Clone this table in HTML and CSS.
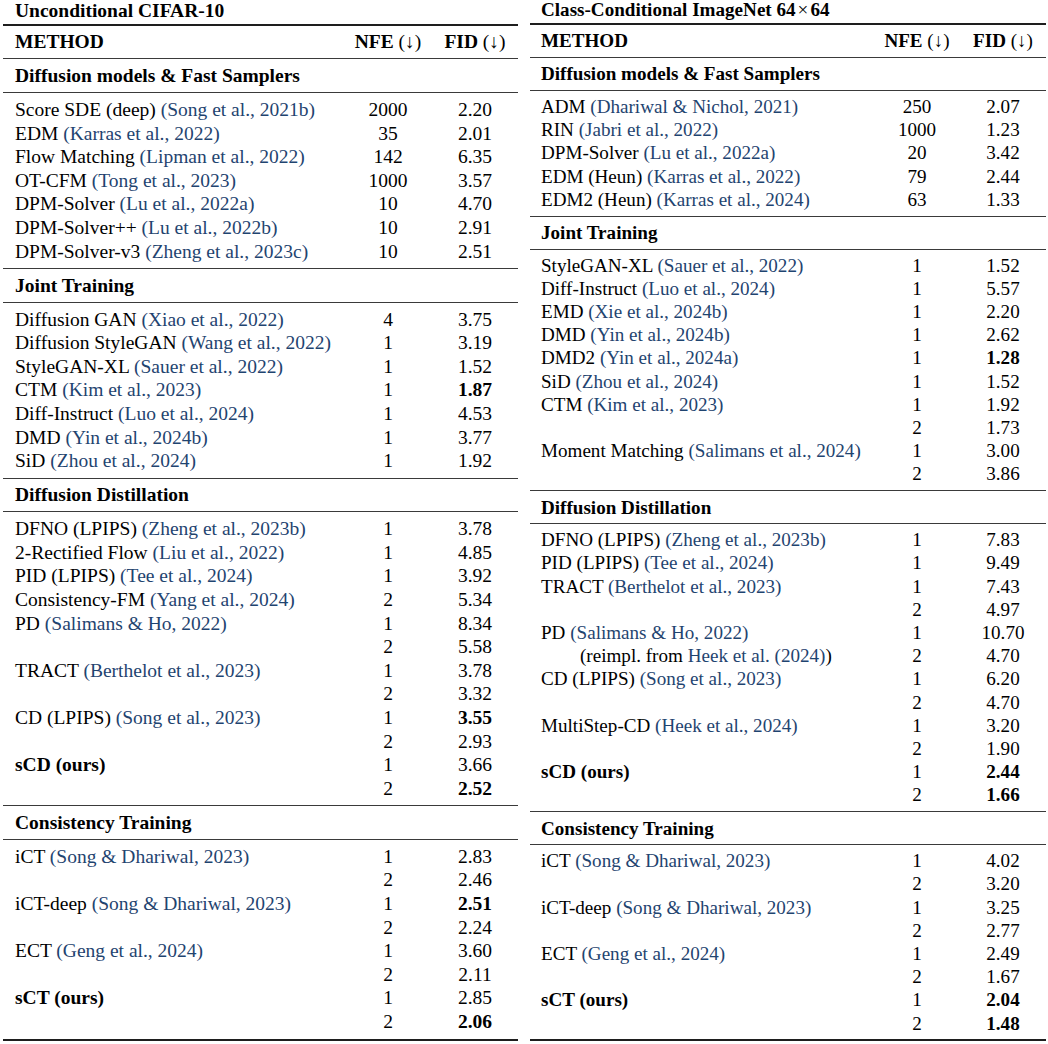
FILE: index.html
```html
<!DOCTYPE html>
<html lang="en">
<head>
<meta charset="utf-8">
<title>Benchmark tables</title>
<link rel="stylesheet" href="styles.css">
</head>
<body>
<div class="page">
  <section class="panel left">
    <div class="title">Unconditional CIFAR-10</div>
    <div class="table">
      <div class="group head">
        <div class="row"><span class="b">METHOD</span><span class="num"><b>NFE</b> (↓)</span><span class="num"><b>FID</b> (↓)</span></div>
      </div>
      <div class="group head"><div class="row"><span class="b">Diffusion models &amp; Fast Samplers</span></div></div>
      <div class="group body">
        <div class="row"><span>Score SDE (deep) <span class="cite">(Song et al., 2021b)</span></span><span class="num">2000</span><span class="num">2.20</span></div>
        <div class="row"><span>EDM <span class="cite">(Karras et al., 2022)</span></span><span class="num">35</span><span class="num">2.01</span></div>
        <div class="row"><span>Flow Matching <span class="cite">(Lipman et al., 2022)</span></span><span class="num">142</span><span class="num">6.35</span></div>
        <div class="row"><span>OT-CFM <span class="cite">(Tong et al., 2023)</span></span><span class="num">1000</span><span class="num">3.57</span></div>
        <div class="row"><span>DPM-Solver <span class="cite">(Lu et al., 2022a)</span></span><span class="num">10</span><span class="num">4.70</span></div>
        <div class="row"><span>DPM-Solver++ <span class="cite">(Lu et al., 2022b)</span></span><span class="num">10</span><span class="num">2.91</span></div>
        <div class="row"><span>DPM-Solver-v3 <span class="cite">(Zheng et al., 2023c)</span></span><span class="num">10</span><span class="num">2.51</span></div>
      </div>
      <div class="group head"><div class="row"><span class="b">Joint Training</span></div></div>
      <div class="group body">
        <div class="row"><span>Diffusion GAN <span class="cite">(Xiao et al., 2022)</span></span><span class="num">4</span><span class="num">3.75</span></div>
        <div class="row"><span>Diffusion StyleGAN <span class="cite">(Wang et al., 2022)</span></span><span class="num">1</span><span class="num">3.19</span></div>
        <div class="row"><span>StyleGAN-XL <span class="cite">(Sauer et al., 2022)</span></span><span class="num">1</span><span class="num">1.52</span></div>
        <div class="row"><span>CTM <span class="cite">(Kim et al., 2023)</span></span><span class="num">1</span><span class="num b">1.87</span></div>
        <div class="row"><span>Diff-Instruct <span class="cite">(Luo et al., 2024)</span></span><span class="num">1</span><span class="num">4.53</span></div>
        <div class="row"><span>DMD <span class="cite">(Yin et al., 2024b)</span></span><span class="num">1</span><span class="num">3.77</span></div>
        <div class="row"><span>SiD <span class="cite">(Zhou et al., 2024)</span></span><span class="num">1</span><span class="num">1.92</span></div>
      </div>
      <div class="group head"><div class="row"><span class="b">Diffusion Distillation</span></div></div>
      <div class="group body">
        <div class="row"><span>DFNO (LPIPS) <span class="cite">(Zheng et al., 2023b)</span></span><span class="num">1</span><span class="num">3.78</span></div>
        <div class="row"><span>2-Rectified Flow <span class="cite">(Liu et al., 2022)</span></span><span class="num">1</span><span class="num">4.85</span></div>
        <div class="row"><span>PID (LPIPS) <span class="cite">(Tee et al., 2024)</span></span><span class="num">1</span><span class="num">3.92</span></div>
        <div class="row"><span>Consistency-FM <span class="cite">(Yang et al., 2024)</span></span><span class="num">2</span><span class="num">5.34</span></div>
        <div class="row"><span>PD <span class="cite">(Salimans &amp; Ho, 2022)</span></span><span class="num">1</span><span class="num">8.34</span></div>
        <div class="row"><span></span><span class="num">2</span><span class="num">5.58</span></div>
        <div class="row"><span>TRACT <span class="cite">(Berthelot et al., 2023)</span></span><span class="num">1</span><span class="num">3.78</span></div>
        <div class="row"><span></span><span class="num">2</span><span class="num">3.32</span></div>
        <div class="row"><span>CD (LPIPS) <span class="cite">(Song et al., 2023)</span></span><span class="num">1</span><span class="num b">3.55</span></div>
        <div class="row"><span></span><span class="num">2</span><span class="num">2.93</span></div>
        <div class="row"><span class="b">sCD (ours)</span><span class="num">1</span><span class="num">3.66</span></div>
        <div class="row"><span></span><span class="num">2</span><span class="num b">2.52</span></div>
      </div>
      <div class="group head"><div class="row"><span class="b">Consistency Training</span></div></div>
      <div class="group body">
        <div class="row"><span>iCT <span class="cite">(Song &amp; Dhariwal, 2023)</span></span><span class="num">1</span><span class="num">2.83</span></div>
        <div class="row"><span></span><span class="num">2</span><span class="num">2.46</span></div>
        <div class="row"><span>iCT-deep <span class="cite">(Song &amp; Dhariwal, 2023)</span></span><span class="num">1</span><span class="num b">2.51</span></div>
        <div class="row"><span></span><span class="num">2</span><span class="num">2.24</span></div>
        <div class="row"><span>ECT <span class="cite">(Geng et al., 2024)</span></span><span class="num">1</span><span class="num">3.60</span></div>
        <div class="row"><span></span><span class="num">2</span><span class="num">2.11</span></div>
        <div class="row"><span class="b">sCT (ours)</span><span class="num">1</span><span class="num">2.85</span></div>
        <div class="row"><span></span><span class="num">2</span><span class="num b">2.06</span></div>
      </div>
    </div>
  </section>

  <section class="panel right">
    <div class="title">Class-Conditional ImageNet 64<span class="times">×</span>64</div>
    <div class="table">
      <div class="group head">
        <div class="row"><span class="b">METHOD</span><span class="num"><b>NFE</b> (↓)</span><span class="num"><b>FID</b> (↓)</span></div>
      </div>
      <div class="group head"><div class="row"><span class="b">Diffusion models &amp; Fast Samplers</span></div></div>
      <div class="group body">
        <div class="row"><span>ADM <span class="cite">(Dhariwal &amp; Nichol, 2021)</span></span><span class="num">250</span><span class="num">2.07</span></div>
        <div class="row"><span>RIN <span class="cite">(Jabri et al., 2022)</span></span><span class="num">1000</span><span class="num">1.23</span></div>
        <div class="row"><span>DPM-Solver <span class="cite">(Lu et al., 2022a)</span></span><span class="num">20</span><span class="num">3.42</span></div>
        <div class="row"><span>EDM (Heun) <span class="cite">(Karras et al., 2022)</span></span><span class="num">79</span><span class="num">2.44</span></div>
        <div class="row"><span>EDM2 (Heun) <span class="cite">(Karras et al., 2024)</span></span><span class="num">63</span><span class="num">1.33</span></div>
      </div>
      <div class="group head"><div class="row"><span class="b">Joint Training</span></div></div>
      <div class="group body">
        <div class="row"><span>StyleGAN-XL <span class="cite">(Sauer et al., 2022)</span></span><span class="num">1</span><span class="num">1.52</span></div>
        <div class="row"><span>Diff-Instruct <span class="cite">(Luo et al., 2024)</span></span><span class="num">1</span><span class="num">5.57</span></div>
        <div class="row"><span>EMD <span class="cite">(Xie et al., 2024b)</span></span><span class="num">1</span><span class="num">2.20</span></div>
        <div class="row"><span>DMD <span class="cite">(Yin et al., 2024b)</span></span><span class="num">1</span><span class="num">2.62</span></div>
        <div class="row"><span>DMD2 <span class="cite">(Yin et al., 2024a)</span></span><span class="num">1</span><span class="num b">1.28</span></div>
        <div class="row"><span>SiD <span class="cite">(Zhou et al., 2024)</span></span><span class="num">1</span><span class="num">1.52</span></div>
        <div class="row"><span>CTM <span class="cite">(Kim et al., 2023)</span></span><span class="num">1</span><span class="num">1.92</span></div>
        <div class="row"><span></span><span class="num">2</span><span class="num">1.73</span></div>
        <div class="row"><span>Moment Matching <span class="cite">(Salimans et al., 2024)</span></span><span class="num">1</span><span class="num">3.00</span></div>
        <div class="row"><span></span><span class="num">2</span><span class="num">3.86</span></div>
      </div>
      <div class="group head"><div class="row"><span class="b">Diffusion Distillation</span></div></div>
      <div class="group body">
        <div class="row"><span>DFNO (LPIPS) <span class="cite">(Zheng et al., 2023b)</span></span><span class="num">1</span><span class="num">7.83</span></div>
        <div class="row"><span>PID (LPIPS) <span class="cite">(Tee et al., 2024)</span></span><span class="num">1</span><span class="num">9.49</span></div>
        <div class="row"><span>TRACT <span class="cite">(Berthelot et al., 2023)</span></span><span class="num">1</span><span class="num">7.43</span></div>
        <div class="row"><span></span><span class="num">2</span><span class="num">4.97</span></div>
        <div class="row"><span>PD <span class="cite">(Salimans &amp; Ho, 2022)</span></span><span class="num">1</span><span class="num">10.70</span></div>
        <div class="row"><span class="indent">(reimpl. from <span class="cite">Heek et al. (2024)</span>)</span><span class="num">2</span><span class="num">4.70</span></div>
        <div class="row"><span>CD (LPIPS) <span class="cite">(Song et al., 2023)</span></span><span class="num">1</span><span class="num">6.20</span></div>
        <div class="row"><span></span><span class="num">2</span><span class="num">4.70</span></div>
        <div class="row"><span>MultiStep-CD <span class="cite">(Heek et al., 2024)</span></span><span class="num">1</span><span class="num">3.20</span></div>
        <div class="row"><span></span><span class="num">2</span><span class="num">1.90</span></div>
        <div class="row"><span class="b">sCD (ours)</span><span class="num">1</span><span class="num b">2.44</span></div>
        <div class="row"><span></span><span class="num">2</span><span class="num b">1.66</span></div>
      </div>
      <div class="group head"><div class="row"><span class="b">Consistency Training</span></div></div>
      <div class="group body">
        <div class="row"><span>iCT <span class="cite">(Song &amp; Dhariwal, 2023)</span></span><span class="num">1</span><span class="num">4.02</span></div>
        <div class="row"><span></span><span class="num">2</span><span class="num">3.20</span></div>
        <div class="row"><span>iCT-deep <span class="cite">(Song &amp; Dhariwal, 2023)</span></span><span class="num">1</span><span class="num">3.25</span></div>
        <div class="row"><span></span><span class="num">2</span><span class="num">2.77</span></div>
        <div class="row"><span>ECT <span class="cite">(Geng et al., 2024)</span></span><span class="num">1</span><span class="num">2.49</span></div>
        <div class="row"><span></span><span class="num">2</span><span class="num">1.67</span></div>
        <div class="row"><span class="b">sCT (ours)</span><span class="num">1</span><span class="num b">2.04</span></div>
        <div class="row"><span></span><span class="num">2</span><span class="num b">1.48</span></div>
      </div>
    </div>
  </section>
</div>
</body>
</html>
```

FILE: styles.css
```css
html, body {
  margin: 0;
  padding: 0;
  background: #ffffff;
}

body {
  font-family: "Liberation Serif", "Times New Roman", Times, serif;
  color: #000000;
}

.page {
  display: flex;
  gap: 12px;
  padding-left: 3px;
}

.panel {
  flex: none;
}

.left {
  width: 515px;
  font-size: 19.5px;
}

.right {
  width: 516px;
  font-size: 19.1px;
}

.title {
  font-weight: bold;
  white-space: nowrap;
}

.left .title {
  line-height: 22px;
  height: 24px;
  padding-left: 12px;
}

.right .title {
  line-height: 19px;
  height: 23px;
  padding-left: 11px;
}

.times {
  font-weight: normal;
  margin: 0 2px;
}

.table {
  border-top: 2px solid #1e1e1e;
  border-bottom: 2px solid #1e1e1e;
}

.group + .group {
  border-top: 1px solid #3a3a3a;
}

.row {
  display: grid;
  white-space: nowrap;
}

.left .row {
  grid-template-columns: 1fr 88px 86px;
  padding-left: 12px;
  line-height: 23.6px;
}

.right .row {
  grid-template-columns: 1fr 86px 86px;
  padding-left: 11px;
  line-height: 23.2px;
}

.left .head {
  padding: 4.45px 0;
}

.left .body {
  padding: 5px 0;
}

.right .head {
  padding: 4.4px 0;
}

.right .body {
  padding: 4px 0 4.6px;
}

.num {
  text-align: center;
}

.b,
.num.b {
  font-weight: bold;
}

.cite {
  color: #1f4470;
}

.indent {
  padding-left: 39px;
}
```
